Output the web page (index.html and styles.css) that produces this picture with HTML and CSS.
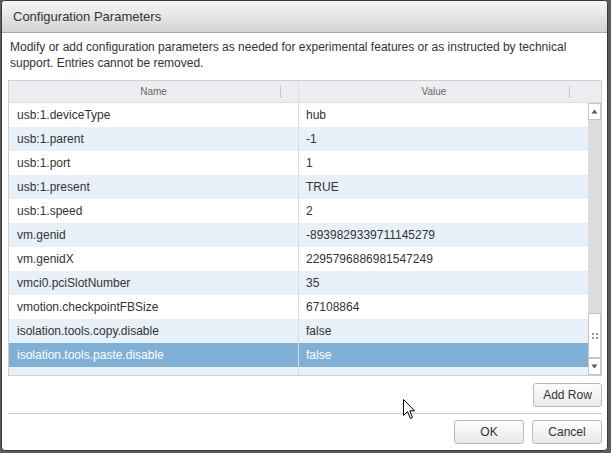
FILE: index.html
```html
<!DOCTYPE html>
<html>
<head>
<meta charset="utf-8">
<link rel="stylesheet" href="styles.css">
</head>
<body>
<div class="dialog">
  <div class="titlebar">Configuration Parameters</div>
  <div class="content">
    <p class="desc">Modify or add configuration parameters as needed for experimental features or as instructed by technical support. Entries cannot be removed.</p>
    <div class="grid">
      <div class="ghead">
        <div class="hcell hname"><span>Name</span><i class="grip"></i></div>
        <div class="hcell hvalue"><span>Value</span><i class="grip"></i></div>
      </div>
      <div class="gbody">
        <div class="rows">
          <div class="row"><div class="c name">usb:1.deviceType</div><div class="c val">hub</div></div>
          <div class="row alt"><div class="c name">usb:1.parent</div><div class="c val">-1</div></div>
          <div class="row"><div class="c name">usb:1.port</div><div class="c val">1</div></div>
          <div class="row alt"><div class="c name">usb:1.present</div><div class="c val">TRUE</div></div>
          <div class="row"><div class="c name">usb:1.speed</div><div class="c val">2</div></div>
          <div class="row alt"><div class="c name">vm.genid</div><div class="c val">-8939829339711145279</div></div>
          <div class="row"><div class="c name">vm.genidX</div><div class="c val">2295796886981547249</div></div>
          <div class="row alt"><div class="c name">vmci0.pciSlotNumber</div><div class="c val">35</div></div>
          <div class="row"><div class="c name">vmotion.checkpointFBSize</div><div class="c val">67108864</div></div>
          <div class="row alt"><div class="c name">isolation.tools.copy.disable</div><div class="c val">false</div></div>
          <div class="row sel"><div class="c name">isolation.tools.paste.disable</div><div class="c val">false</div></div>
          <div class="row alt"><div class="c name"></div><div class="c val"></div></div>
        </div>
        <div class="sbar">
          <div class="sbtn"><svg width="7" height="5" viewBox="0 0 7 5"><path d="M3.5 0.5 L6.5 4.5 L0.5 4.5 Z" fill="#555"/></svg></div>
          <div class="track">
            <div class="thumb"><svg width="6" height="6" viewBox="0 0 6 6"><rect x="0" y="0" width="2" height="2" fill="#999"/><rect x="4" y="0" width="2" height="2" fill="#999"/><rect x="0" y="4" width="2" height="2" fill="#999"/><rect x="4" y="4" width="2" height="2" fill="#999"/></svg></div>
          </div>
          <div class="sbtn"><svg width="7" height="5" viewBox="0 0 7 5"><path d="M0.5 0.5 L6.5 0.5 L3.5 4.5 Z" fill="#555"/></svg></div>
        </div>
      </div>
    </div>
    <div class="addbar"><button class="btn addrow">Add Row</button></div>
    <div class="sep"></div>
    <div class="footer">
      <button class="btn ok">OK</button>
      <button class="btn cancel">Cancel</button>
    </div>
  </div>
  <svg class="cursor" width="13" height="21" viewBox="0 0 13 21"><path d="M0.5 0.5 L0.5 16.5 L4.5 12.5 L7.5 19.5 L9.5 18.5 L6.8 11.8 L11.5 11.8 Z" fill="#fff" stroke="#000" stroke-width="1" stroke-linejoin="miter"/></svg>
</div>
</body>
</html>
```
FILE: styles.css
```css
* { box-sizing: border-box; }
html, body { margin: 0; padding: 0; }
body {
  width: 611px;
  height: 453px;
  background: #5c5c5c;
  font-family: "Liberation Sans", Arial, sans-serif;
  overflow: hidden;
}
.dialog {
  position: relative;
  margin-left: 1px;
  width: 607px;
  height: 451px;
  background: #fff;
  border: 1px solid #3a3a3a;
  border-radius: 4px;
  overflow: hidden;
  display: flex;
  flex-direction: column;
}
.titlebar {
  height: 32px;
  line-height: 31px;
  padding-left: 11px;
  font-size: 13px;
  color: #333;
  background: linear-gradient(#f6f6f6, #d4d4d4);
  border-bottom: 1px solid #a9a9a9;
}
.content {
  flex: 1;
  padding: 0 5px 0 6px;
  display: flex;
  flex-direction: column;
}
.desc {
  margin: 6px 0 0 2px;
  font-size: 12px;
  line-height: 16px;
  color: #333;
  height: 41px;
}
.grid {
  border: 1px solid #cfcfcf;
  height: 296px;
  display: flex;
  flex-direction: column;
}
.ghead {
  height: 22px;
  display: flex;
  background: #eceef1;
  border-bottom: 1px solid #d9dce0;
  font-size: 10px;
  color: #666;
}
.hcell {
  position: relative;
  display: flex;
  align-items: center;
  justify-content: center;
}
.hname {
  width: 290px;
  border-right: 1px solid #dcdfe3;
}
.hvalue {
  flex: 1;
  padding-right: 32px;
}
.grip {
  position: absolute;
  top: 4px;
  bottom: 4px;
  width: 1px;
  background: #c9cbce;
}
.hname .grip { right: 17px; }
.hvalue .grip { right: 31px; }
.gbody {
  flex: 1;
  display: flex;
  overflow: hidden;
}
.rows {
  flex: 1;
  overflow: hidden;
}
.row {
  display: flex;
  height: 24px;
  font-size: 12px;
  line-height: 24px;
  color: #333;
  background: #fff;
}
.row.alt { background: #e8f0f8; }
.row.sel { background: #7fb0d8; color: #fff; }
.c { white-space: nowrap; overflow: hidden; }
.name {
  width: 290px;
  padding-left: 8px;
  border-right: 1px solid #dadada;
}
.val {
  flex: 1;
  padding-left: 7px;
}
.sbar {
  width: 13px;
  display: flex;
  flex-direction: column;
  background: #dcdcdc;
}
.sbtn {
  height: 17px;
  background: #fff;
  border: 1px solid #c4c4c4;
  display: flex;
  align-items: center;
  justify-content: center;
}
.track {
  flex: 1;
  display: flex;
  flex-direction: column;
  justify-content: flex-end;
}
.thumb {
  height: 45px;
  background: #fff;
  border: 1px solid #c4c4c4;
  display: flex;
  align-items: center;
  justify-content: center;
}
.addbar {
  display: flex;
  justify-content: flex-end;
  padding-top: 7px;
  height: 37px;
}
.btn {
  font-family: "Liberation Sans", Arial, sans-serif;
  font-size: 12px;
  color: #333;
  height: 24px;
  padding: 0;
  background: linear-gradient(#fdfdfd, #e9e9e9);
  border: 1px solid #b9b9b9;
  border-radius: 3px;
}
.addrow { width: 69px; }
.sep {
  height: 1px;
  background: #d0d0d0;
}
.footer {
  display: flex;
  justify-content: flex-end;
  gap: 8px;
  padding-top: 6px;
}
.ok, .cancel { width: 70px; }
.cursor {
  position: absolute;
  left: 401px;
  top: 398px;
}
```
